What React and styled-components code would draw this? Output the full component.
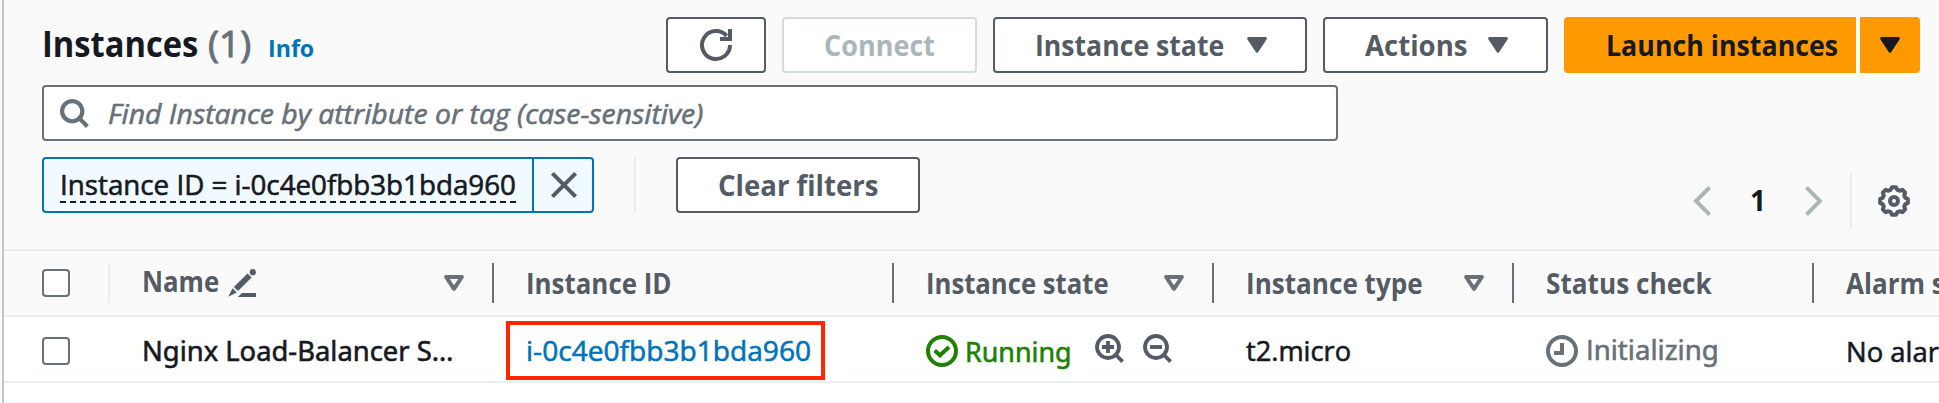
import React from 'react';
import styled, { createGlobalStyle } from 'styled-components';

const Global = createGlobalStyle`
  *, *::after { box-sizing: border-box; }
  body { margin: 0; background: #fafafa; overflow: hidden; }
`;

const Panel = styled.main`
  width: 1937px;
  height: 403px;
  margin-left: 2px;
  border-left: 2px solid #bfc8c9;
  background: #fafafa;
  font-family: 'Open Sans', 'Noto Sans', sans-serif;
  font-size: 28px;
  line-height: 40px;
  color: #16191f;
  overflow: hidden;
`;

const Label = styled.span`
  display: inline-block;
  white-space: nowrap;
  transform-origin: left center;
  transform: translateY(${(p) => p.$dy || 0}px) scaleX(${(p) => p.$sx || 1});
  font-family: ${(p) => (p.$noto ? "'Noto Sans', sans-serif" : 'inherit')};
  font-weight: ${(p) => p.$weight || 'inherit'};
  -webkit-text-stroke: ${(p) => (p.$weight === 700 ? 0 : p.$stroke || 0.6)}px currentColor;
`;

const PlainI = styled.span`
  font-family: 'Open Sans', sans-serif;
`;

const Toolbar = styled.header`
  display: flex;
  align-items: center;
  height: 73px;
  padding: 17px 19px 0 38px;
`;

const Title = styled.h1`
  display: flex;
  align-items: baseline;
  width: 624px;
  margin: 0;
  font-size: 36px;
  line-height: 44px;
`;

const TitlePart = styled.span`
  width: ${(p) => p.$w}px;
  color: ${(p) => p.$color};
  font-size: ${(p) => p.$size || 36}px;
`;

const Actions = styled.div`
  display: flex;
  gap: 16px;
`;

const Button = styled.button`
  display: flex;
  align-items: center;
  justify-content: ${(p) => (p.$center ? 'center' : 'space-between')};
  flex: none;
  width: ${(p) => p.$w}px;
  height: 56px;
  padding: 0 38px 0 ${(p) => (p.$center ? 38 : 40)}px;
  border: 2px solid ${(p) => (p.$disabled ? '#d5dbdb' : '#545b64')};
  border-radius: 4px;
  background: #fff;
  color: ${(p) => (p.$disabled ? '#aab7b8' : '#545b64')};
  font: 700 28px/40px 'Open Sans', sans-serif;
`;

const Split = styled.div`
  display: flex;
  gap: 4px;
  background: #fff;
`;

const Primary = styled.button`
  display: flex;
  align-items: center;
  justify-content: ${(p) => (p.$caret ? 'center' : 'flex-start')};
  width: ${(p) => p.$w}px;
  height: 56px;
  padding: 0 0 0 ${(p) => (p.$caret ? 0 : 42)}px;
  border: 0;
  border-radius: ${(p) => (p.$caret ? '0 4px 4px 0' : '4px 0 0 4px')};
  background: #ff9900;
  color: #16191f;
  font: 700 28px/40px 'Open Sans', sans-serif;
`;

const Search = styled.div`
  display: flex;
  align-items: center;
  width: 1296px;
  height: 56px;
  margin: 12px 0 0 38px;
  padding-left: 16px;
  gap: 19px;
  border: 2px solid #687078;
  border-radius: 4px;
  background: #fff;
  color: #687078;
  font-style: italic;
`;

const FilterRow = styled.div`
  display: flex;
  height: 110px;
  padding: 16px 29px 0 38px;
  border-bottom: 2px solid #eaeded;
`;

const Token = styled.div`
  display: flex;
  width: 552px;
  height: 56px;
  border: 2px solid #0073bb;
  border-radius: 4px;
  background: #f1faff;
`;

const TokenText = styled.div`
  flex: 1;
  padding: 4px 0 0 16px;
`;

const TokenUnderline = styled.div`
  width: 456px;
  height: 40px;
  border-bottom: 2px dashed #16191f;
`;

const TokenClose = styled.div`
  display: flex;
  align-items: center;
  justify-content: center;
  width: 60px;
  padding-left: 1px;
  border-left: 2px solid #0073bb;
  color: #545b64;
`;

const Rule = styled.div`
  width: 2px;
  height: 56px;
  margin: ${(p) => p.$m};
  background: #eaeded;
`;

const Pagination = styled.div`
  display: flex;
  align-items: center;
  height: 56px;
  margin: 16px 0 0 auto;
  color: #aab7b8;
`;

const PageNumber = styled.span`
  width: 94px;
  text-align: center;
  color: #16191f;
  font-weight: 700;
`;

const IconGroup = styled.div`
  display: flex;
  color: #545b64;
`;

const TableRow = styled.div`
  display: grid;
  grid-template-columns: 106px 384px 400px 320px 300px 300px 1fr;
  height: 66px;
  align-items: center;
  border-bottom: 2px solid #eaeded;
  background: ${(p) => (p.$head ? '#fafafa' : '#fff')};
  color: ${(p) => (p.$head ? '#545b64' : '#16191f')};
  font-weight: ${(p) => (p.$head ? 700 : 400)};
`;

const Cell = styled.div`
  display: flex;
  align-items: center;
  min-width: 0;
  height: 40px;
  padding: 0 28px 0 ${(p) => p.$pl ?? 32}px;
  border-right: ${(p) => (p.$line ? `2px solid ${p.$line}` : '2px solid transparent')};
  color: ${(p) => p.$color || 'inherit'};
  white-space: nowrap;
`;

const Checkbox = styled.span`
  width: 28px;
  height: 28px;
  margin-top: ${(p) => p.$mt || 0}px;
  border: 2px solid #687078;
  border-radius: 4px;
  background: #fff;
`;

const SortIcon = styled.span`
  display: flex;
  margin-left: auto;
  color: #687078;
`;

const Marked = styled.span`
  position: relative;
  color: #0073bb;
  &::after {
    content: '';
    position: absolute;
    left: -20px;
    top: -8px;
    width: 319px;
    height: 59px;
    border: 4px solid #ff2600;
  }
`;

const Filler = styled.div`
  height: 40px;
  background: #fff;
`;

const Icon = styled.svg`
  flex: none;
  display: block;
  width: ${(p) => p.$w}px;
  height: ${(p) => p.$h || p.$w}px;
  margin: ${(p) => p.$m || 0};
  fill: none;
  stroke: currentColor;
  stroke-width: ${(p) => p.$s ?? 4};
  overflow: visible;
`;

const Caret = () => (
  <Icon $w={20} $h={16} viewBox="0 0 20 16" $s={3} strokeLinejoin="round">
    <path d="M1.6 1.5h16.8L10 14.3z" fill="currentColor" />
  </Icon>
);

const SortCaret = () => (
  <Icon $w={20} $h={16} viewBox="0 0 20 16" strokeLinejoin="round">
    <path d="M2.1 2h15.8L10 13.8z" />
  </Icon>
);

const Magnifier = ({ children }) => (
  <Icon $w={29} $m="-1px 0 0 19px" viewBox="0 0 29 29" $s={3.8}>
    <circle cx="13" cy="13" r="11" />
    <path d="M20.5 20.5l7.1 7.1" />
    {children}
  </Icon>
);

const polar = (r, deg) => {
  const a = (deg * Math.PI) / 180;
  return `${(16 + r * Math.sin(a)).toFixed(2)} ${(16 - r * Math.cos(a)).toFixed(2)}`;
};
const gearPath = `M${Array.from({ length: 8 }, (_, k) => k * 45)
  .flatMap((a) => [polar(14, a - 8), polar(14, a + 8), polar(11.6, a + 17), polar(11.6, a + 28)])
  .join('L')}z`;

export default function App() {
  return (
    <>
      <Global />
      <Panel>
        <Toolbar>
          <Title>
            <TitlePart $w={166}><Label $weight={700} $sx={0.908} $dy={1}>Instances</Label></TitlePart>
            <TitlePart $w={60} $color="#687078"><Label $weight={400} $stroke={1} $sx={1.03} $dy={1}>(1)</Label></TitlePart>
            <TitlePart $w={50} $color="#0073bb" $size={24}><Label $weight={700} $sx={0.965} $dy={1}>Info</Label></TitlePart>
          </Title>
          <Actions>
            <Button $w={100} $center>
              <Icon $w={32} viewBox="0 0 32 32">
                <path d="M30 16A14 14 0 1 1 26.6 6.9" />
                <path d="M30 0v10H20" />
              </Icon>
            </Button>
            <Button $w={195} $disabled><Label $weight={700} $sx={0.965}>Connect</Label></Button>
            <Button $w={314}><Label $weight={700} $sx={0.951}>Instance state</Label><Caret /></Button>
            <Button $w={225}><Label $weight={700} $sx={0.985}>Actions</Label><Caret /></Button>
            <Split>
              <Primary $w={292}><Label $weight={700} $sx={0.956}>Launch instances</Label></Primary>
              <Primary $w={60} $caret><Caret /></Primary>
            </Split>
          </Actions>
        </Toolbar>
        <Search>
          <Icon $w={29} viewBox="0 0 29 29" $s={4.2}>
            <circle cx="12.2" cy="12.2" r="10.1" />
            <path d="M19.3 19.3l8.1 8.1" />
          </Icon>
          <Label $sx={1.014}>Find Instance by attribute or tag (case-sensitive)</Label>
        </Search>
        <FilterRow>
          <Token>
            <TokenText>
              <TokenUnderline><Label $sx={0.991} $dy={1}>Instance ID = i-0c4e0fbb3b1bda960</Label></TokenUnderline>
            </TokenText>
            <TokenClose>
              <Icon $w={26} viewBox="0 0 26 26"><path d="M1.4 1.4l23.2 23.2M24.6 1.4L1.4 24.6" /></Icon>
            </TokenClose>
          </Token>
          <Rule $m="0 40px" />
          <Button $w={244}><Label $weight={700} $sx={0.984}>Clear filters</Label></Button>
          <Pagination>
            <Icon $w={18} $h={30} viewBox="0 0 18 30"><path d="M16.6 1.4L3 15l13.6 13.6" /></Icon>
            <PageNumber><Label $weight={700} $dy={-1}>1</Label></PageNumber>
            <Icon $w={18} $h={30} viewBox="0 0 18 30"><path d="M1.4 1.4L15 15 1.4 28.6" /></Icon>
            <Rule $m="0 26px 0 27px" />
            <IconGroup>
              <Icon $w={32} viewBox="0 0 32 32" strokeLinejoin="round">
                <path d={gearPath} />
                <circle cx="16" cy="16" r="4" />
              </Icon>
            </IconGroup>
          </Pagination>
        </FilterRow>
        <TableRow $head>
          <Cell $pl={38} $line="#eaeded"><Checkbox /></Cell>
          <Cell $line="#687078">
            <Label $weight={700} $sx={0.923} $dy={-2}>Name</Label>
            <Icon $w={28} viewBox="0 0 28 28" $m="0 0 0 2px" $s={0}>
              <g fill="currentColor">
                <circle cx="24.8" cy="3.2" r="3.1" />
                <path d="M19.5 4.4l4.1 4.1L10 22l-4.1-4.1zM4.6 19.3l4.1 4.1L.2 27.8zM14 24h14v4H9.8z" />
              </g>
            </Icon>
            <SortIcon><SortCaret /></SortIcon>
          </Cell>
          <Cell $line="#687078"><Label $weight={700} $sx={0.925}>Instance ID</Label></Cell>
          <Cell $line="#687078">
            <Label $weight={700} $sx={0.918}>Instance state</Label>
            <SortIcon><SortCaret /></SortIcon>
          </Cell>
          <Cell $line="#687078">
            <Label $weight={700} $sx={0.932}>Instance type</Label>
            <SortIcon><SortCaret /></SortIcon>
          </Cell>
          <Cell $line="#687078"><Label $weight={700} $sx={0.935}>Status check</Label></Cell>
          <Cell><Label $weight={700} $sx={0.93}>Alarm status</Label></Cell>
        </TableRow>
        <TableRow>
          <Cell $pl={38}><Checkbox $mt={4} /></Cell>
          <Cell><Label $noto $sx={0.978} $dy={1}>Nginx Load-Balancer S…</Label></Cell>
          <Cell><Marked><Label $sx={1.004} $dy={1}>i-0c4e0fbb3b1bda960</Label></Marked></Cell>
          <Cell $color="#1d8102">
            <Icon $w={32} viewBox="0 0 32 32" $m="4px 7px 0 0">
              <circle cx="16" cy="16" r="14" />
              <path d="M8.6 15.4l5.4 4.8 9-8.2" />
            </Icon>
            <Label $noto $sx={0.96} $dy={2}>Running</Label>
            <IconGroup>
              <Magnifier><path d="M13 7v12M7 13h12" /></Magnifier>
              <Magnifier><path d="M7 13h12" /></Magnifier>
            </IconGroup>
          </Cell>
          <Cell><Label $sx={0.972} $dy={1}>t2.micro</Label></Cell>
          <Cell $color="#687078">
            <Icon $w={32} viewBox="0 0 32 32" $m="4px 8px 0 0">
              <circle cx="16" cy="16" r="14" />
              <path d="M16 8v10H8" />
            </Icon>
            <Label $noto $sx={0.985}><PlainI>I</PlainI>nitializing</Label>
          </Cell>
          <Cell $pl={32}><Label $sx={0.98} $dy={2}>No alarms</Label></Cell>
        </TableRow>
        <Filler />
      </Panel>
    </>
  );
}
